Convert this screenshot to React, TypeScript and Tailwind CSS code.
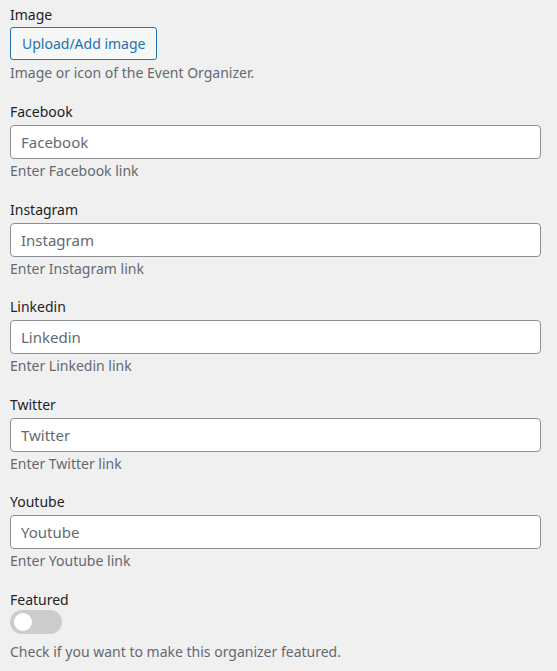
const socials = ['Facebook', 'Instagram', 'Linkedin', 'Twitter', 'Youtube']

const App = () => {
  return (
    <div
      className="min-h-[671px] bg-[#f0f0f1] px-[10px] pt-[5px] text-[14px] text-[#1d2327]"
      style={{ fontFamily: '"Noto Sans", "Open Sans", sans-serif' }}
    >
      <div className="mb-[19px]">
        <label className="block leading-5">Image</label>
        <button
          type="button"
          className="mt-[2px] h-[33px] rounded-[3px] border border-[#2271b1] bg-[#f6f7f7] px-[11px] text-[14px] text-[#2271b1]"
        >
          Upload/Add image
        </button>
        <p className="mt-[3px] leading-5 text-[#646970]">Image or icon of the Event Organizer.</p>
      </div>

      {socials.map((name) => (
        <div key={name} className="mb-[18.5px]">
          <label className="block leading-5">{name}</label>
          <input
            type="text"
            placeholder={name}
            className="mt-[3px] block h-[34px] w-[531px] rounded-[4px] border border-[#8c8f94] bg-white px-[10px] text-[15px] text-[#2c3338] placeholder:text-[#646970] outline-none"
          />
          <p className="mt-[2px] leading-5 text-[#646970]">Enter {name} link</p>
        </div>
      ))}

      <div>
        <label className="block leading-5">Featured</label>
        <div className="flex h-[24px] w-[52px] items-center rounded-full bg-[#cccccc] px-[4px]">
          <span className="h-[18px] w-[18px] rounded-full bg-white" />
        </div>
        <p className="mt-[8px] leading-5 text-[#646970]">Check if you want to make this organizer featured.</p>
      </div>
    </div>
  )
}

export default App
